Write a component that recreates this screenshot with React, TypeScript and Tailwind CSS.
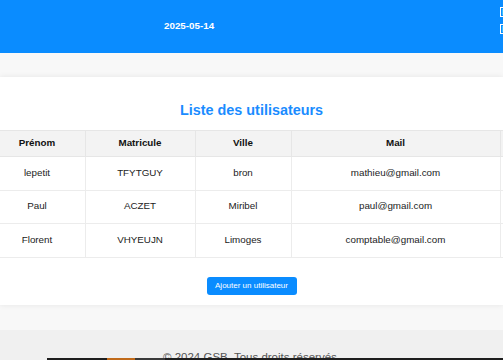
import React from "react"

interface Utilisateur {
  prenom: string
  matricule: string
  ville: string
  mail: string
}

const utilisateurs: Utilisateur[] = [
  { prenom: "lepetit", matricule: "TFYTGUY", ville: "bron", mail: "mathieu@gmail.com" },
  { prenom: "Paul", matricule: "ACZET", ville: "Miribel", mail: "paul@gmail.com" },
  { prenom: "Florent", matricule: "VHYEUJN", ville: "Limoges", mail: "comptable@gmail.com" },
]

const Header: React.FC = () => {
  return (
    <header className="flex h-[53px] bg-[#0a8cff] text-white">
      <div className="w-[164px] shrink-0" />
      <div className="flex items-center text-[9.8px] font-bold">2025-05-14</div>
      <div className="ml-auto flex w-[3px] shrink-0 flex-col gap-[7px] overflow-visible pt-[7px] text-[9.6px] font-bold whitespace-nowrap">
        <span className="border border-white px-[1px] leading-[8px]">Bienvenue</span>
        <span className="border border-white px-[1px] leading-[8px]">Déconnexion</span>
      </div>
    </header>
  )
}

const UserTable: React.FC = () => {
  return (
    <div className="flex justify-center">
      <table className="w-[525px] shrink-0 table-fixed border-collapse text-[9.8px]">
        <colgroup>
          <col className="w-[96px]" />
          <col className="w-[110px]" />
          <col className="w-[96px]" />
          <col className="w-[209px]" />
          <col className="w-[14px]" />
        </colgroup>
        <thead>
          <tr className="h-[26px] bg-[#f3f3f3] text-[#111]">
            <th className="border border-[#e6e6e6] font-bold">Prénom</th>
            <th className="border border-[#e6e6e6] font-bold">Matricule</th>
            <th className="border border-[#e6e6e6] font-bold">Ville</th>
            <th className="border border-[#e6e6e6] font-bold">Mail</th>
            <th className="border border-[#e6e6e6]" />
          </tr>
        </thead>
        <tbody>
          {utilisateurs.map((u) => (
            <tr key={u.matricule} className="h-[33.5px] text-center text-[#222]">
              <td className="border border-[#ececec]">{u.prenom}</td>
              <td className="border border-[#ececec]">{u.matricule}</td>
              <td className="border border-[#ececec]">{u.ville}</td>
              <td className="border border-[#ececec]">{u.mail}</td>
              <td className="border border-[#ececec]" />
            </tr>
          ))}
        </tbody>
      </table>
    </div>
  )
}

export default function App() {
  return (
    <div
      className="h-[360px] w-[503px] overflow-hidden bg-[#f8f8f8]"
      style={{ fontFamily: '"Liberation Sans", Arial, sans-serif' }}
    >
      <Header />
      <main className="pt-[24px]">
        <section className="h-[228px] bg-white pt-[25px] shadow-[0_0_6px_rgba(0,0,0,0.08)]">
          <h2 className="mb-[12px] text-center text-[14.4px] leading-[16px] font-bold text-[#1a8cff]">
            Liste des utilisateurs
          </h2>
          <UserTable />
          <div className="mt-[19px] flex justify-center">
            <button className="h-[18px] w-[90px] rounded-[3px] bg-[#0a8cff] text-[8px] text-white">
              Ajouter un utilisateur
            </button>
          </div>
        </section>
      </main>
      <footer className="mt-[25px] h-[30px] bg-[#f0f0f0] pt-[21px] text-center text-[11.5px] leading-[12px] text-[#555]">
        © 2024 GSB. Tous droits réservés.
      </footer>
      <div className="-mt-[2px] ml-[47px] flex h-[2px]">
        <div className="w-[60px] bg-[#1e1e1e]" />
        <div className="w-[28px] bg-[#c06a1a]" />
        <div className="w-[30px] bg-[#3a3a3a]" />
        <div className="flex-1 bg-[#1e1e1e]" />
      </div>
    </div>
  )
}
